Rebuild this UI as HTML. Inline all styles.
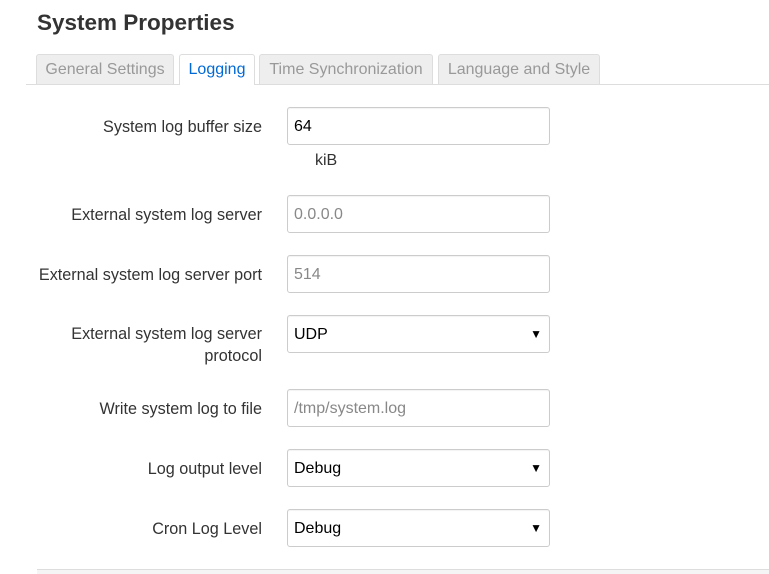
<!DOCTYPE html>
<html><head><style>
body{margin:0;width:769px;height:573px;background:#fff;font-family:"Liberation Sans",sans-serif;position:relative;overflow:hidden;color:#333}
.a{position:absolute}
h1{position:absolute;left:37px;top:10px;margin:0;font-size:22.5px;font-weight:bold;color:#333}
.tab{position:absolute;top:54px;height:30px;box-sizing:border-box;background:#eee;border:1px solid #ddd;border-bottom:none;border-radius:3px 3px 0 0;color:#999;font-size:16px;line-height:29px;text-align:center;white-space:nowrap}
.tab.act{background:#fff;color:#0069d6;height:31px}
.lbl{position:absolute;right:507px;font-size:16.2px;color:#333;text-align:right;line-height:22px;white-space:nowrap}
.in{position:absolute;left:287px;width:263px;height:38px;box-sizing:border-box;border:1px solid #ccc;border-radius:3px;font-size:16px;line-height:37px;padding-left:6px;color:#000;box-shadow:inset 0 1px 1px rgba(0,0,0,.05)}
.ph{color:#888}
.arr{position:absolute;right:7px;top:0;font-size:12px;color:#000}
</style></head><body>
<h1>System Properties</h1>
<div class="a" style="left:26px;right:0;top:84px;height:1px;background:#ddd"></div>
<div class="tab" style="left:36px;width:138px">General Settings</div>
<div class="tab act" style="left:179px;width:76px">Logging</div>
<div class="tab" style="left:259px;width:174px">Time Synchronization</div>
<div class="tab" style="left:438px;width:162px">Language and Style</div>

<div class="lbl" style="top:116px">System log buffer size</div>
<div class="in" style="top:107px">64</div>
<div class="a" style="left:315px;top:152px;font-size:16px">kiB</div>

<div class="lbl" style="top:204px">External system log server</div>
<div class="in ph" style="top:195px">0.0.0.0</div>

<div class="lbl" style="top:264px">External system log server port</div>
<div class="in ph" style="top:255px">514</div>

<div class="lbl" style="top:323px">External system log server<br>protocol</div>
<div class="in" style="top:315px">UDP<span class="arr">▼</span></div>

<div class="lbl" style="top:398px">Write system log to file</div>
<div class="in ph" style="top:389px">/tmp/system.log</div>

<div class="lbl" style="top:458px">Log output level</div>
<div class="in" style="top:449px">Debug<span class="arr">▼</span></div>

<div class="lbl" style="top:518px">Cron Log Level</div>
<div class="in" style="top:509px">Debug<span class="arr">▼</span></div>

<div class="a" style="left:37px;right:0;top:569px;height:4px;background:#f5f5f5;border-top:1px solid #ddd"></div>
</body></html>
